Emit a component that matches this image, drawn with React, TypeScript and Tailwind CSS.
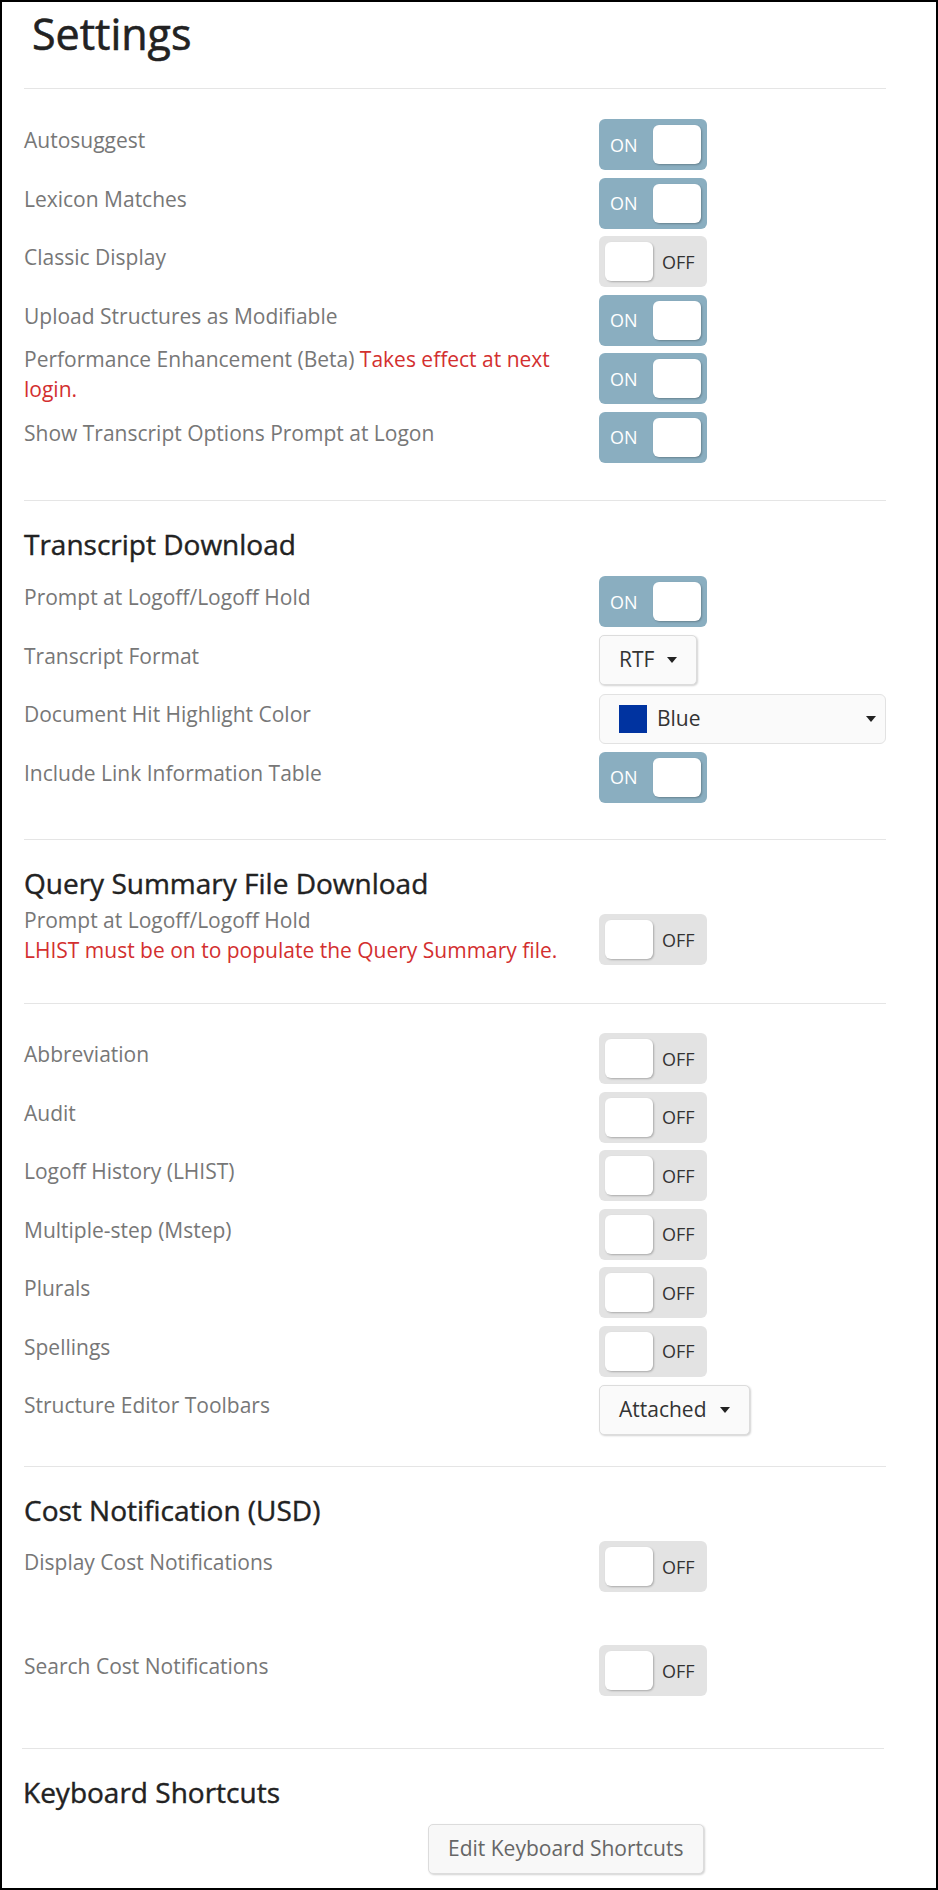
import React from 'react'

type Row =
    | { kind: 'toggle'; label: React.ReactNode; on: boolean }
    | { kind: 'dropdown'; label: React.ReactNode; value: string }
    | { kind: 'color'; label: React.ReactNode; value: string }

function Caret() {
    return <span className="inline-block h-0 w-0 border-x-[5.5px] border-t-[6px] border-x-transparent border-t-[#222]" />
}

function Toggle({ on }: { on: boolean }) {
    if (on) {
        return (
            <div className="flex h-[51px] w-[108px] items-center rounded-[6px] bg-[#8aaec0] p-[6px]">
                <span className="flex-1 pl-[5px] text-[18px] leading-none text-white">ON</span>
                <span className="h-[39px] w-[48px] rounded-[6px] bg-white shadow-[1px_1px_2px_rgba(0,0,0,0.25)]" />
            </div>
        )
    }
    return (
        <div className="flex h-[51px] w-[108px] items-center rounded-[6px] bg-[#e3e3e3] p-[6px]">
            <span className="h-[39px] w-[48px] rounded-[6px] bg-white shadow-[1px_1px_2px_rgba(0,0,0,0.25)]" />
            <span className="flex-1 pl-[9px] text-[18px] leading-none text-[#333]">OFF</span>
        </div>
    )
}

function Dropdown({ value }: { value: string }) {
    return (
        <div className="flex h-[50px] w-max items-center gap-[13px] rounded-[5px] border border-[#dcdcdc] bg-[#fafafa] px-[19px] shadow-[1px_1px_2px_rgba(0,0,0,0.18)]">
            <span className="text-[21px] text-[#333]">{value}</span>
            <Caret />
        </div>
    )
}

function ColorSelect({ value }: { value: string }) {
    return (
        <div className="flex h-[50px] w-full items-center rounded-[6px] border border-[#e2e2e2] bg-[#fafafa] pl-[19px] pr-[9px]">
            <span className="h-[28px] w-[28px] bg-[#0033a0]" />
            <span className="ml-[10px] flex-1 text-[21px] text-[#333]">{value}</span>
            <Caret />
        </div>
    )
}

function SettingRow({ row }: { row: Row }) {
    return (
        <div className="flex h-[51px] items-center">
            {/* label is centred on the control and may overflow the row */}
            <div className="w-[575px] shrink-0 pb-[9px] pr-[20px] text-[21px] leading-[30px] text-[#777]">{row.label}</div>
            <div className="flex-1">
                {row.kind === 'toggle' && <Toggle on={row.on} />}
                {row.kind === 'dropdown' && <Dropdown value={row.value} />}
                {row.kind === 'color' && <ColorSelect value={row.value} />}
            </div>
        </div>
    )
}

function Rows({ rows, className }: { rows: Row[]; className?: string }) {
    return (
        <div className={`flex flex-col gap-[7.5px] ${className ?? ''}`}>
            {rows.map((row, i) => (
                <SettingRow key={i} row={row} />
            ))}
        </div>
    )
}

function SectionTitle({ children, className }: { children: React.ReactNode; className?: string }) {
    return (
        <h4
            className={`mt-[23px] h-[40px] text-[28px] leading-[40px] text-[#222] [-webkit-text-stroke:0.4px_#222] ${className ?? ''}`}
        >
            {children}
        </h4>
    )
}

const Red = ({ children }: { children: React.ReactNode }) => <span className="text-[#d32f2f]">{children}</span>

export default function App() {
    const general: Row[] = [
        { kind: 'toggle', label: 'Autosuggest', on: true },
        { kind: 'toggle', label: 'Lexicon Matches', on: true },
        { kind: 'toggle', label: 'Classic Display', on: false },
        { kind: 'toggle', label: 'Upload Structures as Modifiable', on: true },
        {
            kind: 'toggle',
            label: (
                <>
                    Performance Enhancement (Beta) <Red>Takes effect at next login.</Red>
                </>
            ),
            on: true,
        },
        { kind: 'toggle', label: 'Show Transcript Options Prompt at Logon', on: true },
    ]

    const transcript: Row[] = [
        { kind: 'toggle', label: 'Prompt at Logoff/Logoff Hold', on: true },
        { kind: 'dropdown', label: 'Transcript Format', value: 'RTF' },
        { kind: 'color', label: 'Document Hit Highlight Color', value: 'Blue' },
        { kind: 'toggle', label: 'Include Link Information Table', on: true },
    ]

    const query: Row[] = [
        {
            kind: 'toggle',
            label: (
                <>
                    <div>Prompt at Logoff/Logoff Hold</div>
                    <div className="text-[#d32f2f]">LHIST must be on to populate the Query Summary file.</div>
                </>
            ),
            on: false,
        },
    ]

    const options: Row[] = [
        { kind: 'toggle', label: 'Abbreviation', on: false },
        { kind: 'toggle', label: 'Audit', on: false },
        { kind: 'toggle', label: 'Logoff History (LHIST)', on: false },
        { kind: 'toggle', label: 'Multiple-step (Mstep)', on: false },
        { kind: 'toggle', label: 'Plurals', on: false },
        { kind: 'toggle', label: 'Spellings', on: false },
        { kind: 'dropdown', label: 'Structure Editor Toolbars', value: 'Attached' },
    ]

    return (
        <div className="h-[1890px] w-[938px] border-2 border-black bg-white font-['Open_Sans',sans-serif]">
            <div className="pl-[22px] pr-[50px]">
                {/* title */}
                <h2 className="pl-[8px] pt-[9px] text-[43px] leading-[46px] text-[#222] [-webkit-text-stroke:0.6px_#222]">Settings</h2>

                <div className="mt-[31px] h-px bg-[#e5e5e5]" />
                <Rows rows={general} className="mt-[30px]" />

                {/* transcript download */}
                <div className="mt-[37.5px] h-px bg-[#e5e5e5]" />
                <SectionTitle>Transcript Download</SectionTitle>
                <Rows rows={transcript} className="mt-[12px]" />

                {/* query summary */}
                <div className="mt-[36.5px] h-px bg-[#e5e5e5]" />
                <SectionTitle>Query Summary File Download</SectionTitle>
                <Rows rows={query} className="mt-[11px]" />

                {/* options */}
                <div className="mt-[38px] h-px bg-[#e5e5e5]" />
                <Rows rows={options} className="mt-[29px]" />

                {/* cost notification */}
                <div className="mt-[31px] h-px bg-[#e5e5e5]" />
                <SectionTitle>Cost Notification (USD)</SectionTitle>
                <div className="mt-[11px] flex flex-col gap-[53px]">
                    <SettingRow row={{ kind: 'toggle', label: 'Display Cost Notifications', on: false }} />
                    <SettingRow row={{ kind: 'toggle', label: 'Search Cost Notifications', on: false }} />
                </div>

                {/* keyboard shortcuts */}
                <div className="-ml-[2px] mr-[2px] mt-[52px] h-px bg-[#e5e5e5]" />
                <SectionTitle className="-ml-[1px]">Keyboard Shortcuts</SectionTitle>
                <button className="ml-[404px] mt-[12px] h-[50px] rounded-[5px] border border-[#dcdcdc] bg-[#f8f8f8] px-[19px] text-[21px] text-[#666] shadow-[1px_1px_2px_rgba(0,0,0,0.18)]">
                    Edit Keyboard Shortcuts
                </button>
            </div>
        </div>
    )
}
